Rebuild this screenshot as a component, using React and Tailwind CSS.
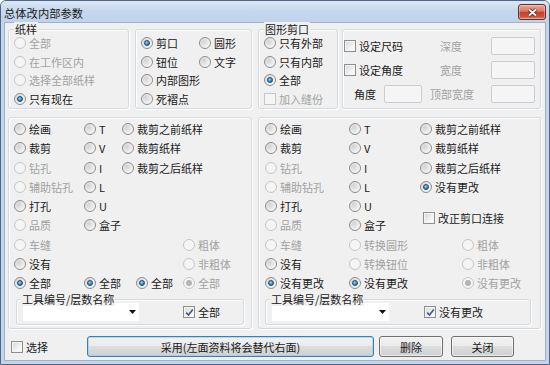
import React from "react";

function Radio({ checked, disabled, label }) {
  return (
    <div className="flex h-full items-center gap-[3px] whitespace-nowrap">
      <span
        className={`flex h-[12px] w-[12px] shrink-0 items-center justify-center rounded-full border ${
          disabled
            ? "border-[#c6c6c6] bg-[#f5f5f5]"
            : "border-[#8c8c8c] bg-[radial-gradient(circle_at_35%_35%,#d2d2d2,#f6f6f6_75%)]"
        }`}
      >
        {checked && (
          <span
            className={`h-[6px] w-[6px] rounded-full ${
              disabled
                ? "bg-[#b4b4b4]"
                : "border border-[#1d4f7a] bg-[radial-gradient(circle_at_40%_35%,#9ad8f8,#2a7fbd_65%,#114d82)]"
            }`}
          />
        )}
      </span>
      <span className={disabled ? "text-[#a2a2a2]" : "text-[#1a1a1a]"}>{label}</span>
    </div>
  );
}

function Check({ checked, disabled, label }) {
  return (
    <div className="flex h-full items-center gap-[3px] whitespace-nowrap">
      <span
        className={`flex h-[12px] w-[12px] shrink-0 items-center justify-center border ${
          disabled
            ? "border-[#c6c6c6] bg-[#f5f5f5]"
            : "border-[#8e8f8f] bg-[linear-gradient(135deg,#d6d6d6,#fbfbfb_80%)] shadow-[inset_0_0_0_1px_#f4f4f4]"
        }`}
      >
        {checked && (
          <svg width="9" height="9" viewBox="0 0 9 9">
            <path d="M1.2 4.6 L3.5 7 L7.8 1.5" fill="none" stroke="#3d5a9a" strokeWidth="1.7" />
          </svg>
        )}
      </span>
      <span className={disabled ? "text-[#a2a2a2]" : "text-[#1a1a1a]"}>{label}</span>
    </div>
  );
}

function Group({ title, className, titleLeft, children }) {
  return (
    <div
      className={`relative rounded-[3px] border border-[#d3dbe1] shadow-[inset_1px_1px_0_#fff,1px_1px_0_#fff] ${className}`}
    >
      {title && (
        <span
          className={`absolute top-[-8px] bg-[#f0f0f0] px-[1px] leading-[14px] text-[#1a1a1a] whitespace-nowrap ${
            titleLeft || "left-[5px]"
          }`}
        >
          {title}
        </span>
      )}
      {children}
    </div>
  );
}

function Input({ w }) {
  return <div className={`h-[18px] ${w} rounded-[2px] border border-[#c9cdd1] bg-[#f5f5f5]`} />;
}

function Dropdown({ w }) {
  return (
    <div className={`flex h-[18px] ${w} items-center justify-end bg-white pr-[3px]`}>
      <svg width="7" height="4" viewBox="0 0 7 4">
        <path d="M0 0 H7 L3.5 4 Z" fill="#111" />
      </svg>
    </div>
  );
}

function Button({ w, children, primary }) {
  return (
    <div
      className={`flex h-[21px] ${w} items-center justify-center rounded-[3px] border text-[#1a1a1a] bg-[linear-gradient(#f2f2f2,#ebebeb_50%,#dddddd_50%,#cfcfcf)] ${
        primary
          ? "border-[#3c7fb1] shadow-[inset_0_0_0_1px_rgba(150,210,245,0.7)]"
          : "border-[#707070] shadow-[inset_0_0_0_1px_rgba(255,255,255,0.6)]"
      }`}
    >
      {children}
    </div>
  );
}

export default function App() {
  return (
    <div className="h-[365px] w-[550px] select-none font-['Noto_Sans_CJK_SC','Noto_Sans',sans-serif] text-[11px] leading-[14px]">
      <div className="flex h-full w-full flex-col rounded-t-[6px] border border-[#4f6787] bg-[#c3d5eb]">
        {/* title bar */}
        <div className="flex h-[21px] shrink-0 items-start justify-between rounded-t-[5px] bg-[linear-gradient(#dbe7f5,#c7d8ed_45%,#c0d3ea)] pl-[3px] pr-[3px] pt-[3px]">
          <span className="mt-[2px] text-[11.3px] leading-[14px] text-[#1a1a1a]">总体改内部参数</span>
          <div className="flex h-[16px] w-[28px] items-center justify-center rounded-[3px] border border-[#6b2a20] bg-[linear-gradient(#eaa99a,#d8765f_45%,#c44328_52%,#c84f38_80%,#d9846e)] shadow-[inset_0_0_0_1px_rgba(255,255,255,0.35)]">
            <svg width="11" height="9" viewBox="0 0 11 9">
              <path d="M2 1.5 L9 7.5 M9 1.5 L2 7.5" stroke="#5a1f16" strokeWidth="3.4" />
              <path d="M2 1.5 L9 7.5 M9 1.5 L2 7.5" stroke="#fff" strokeWidth="1.8" />
            </svg>
          </div>
        </div>

        {/* body */}
        <div className="mx-[3px] flex h-[339px] flex-col border border-[#9fb2c8] bg-[#f0f0f0]">
          {/* top row */}
          <div className="ml-[3px] mt-[6px] flex h-[80px]">
            <Group title="纸样" className="h-[80px] w-[121px]">
              <div className="flex flex-col pl-[5px] pt-[3.65px]">
                <div className="h-[18.7px]"><Radio disabled label="全部" /></div>
                <div className="h-[18.7px]"><Radio disabled label="在工作区内" /></div>
                <div className="h-[18.7px]"><Radio disabled label="选择全部纸样" /></div>
                <div className="h-[18.7px]"><Radio checked label="只有现在" /></div>
              </div>
            </Group>

            <Group className="ml-[6px] h-[80px] w-[117px]">
              <div className="grid grid-cols-[58px_1fr] grid-rows-[repeat(4,18.7px)] pl-[5px] pt-[3.65px]">
                <Radio checked label="剪口" />
                <Radio label="圆形" />
                <Radio label="钮位" />
                <Radio label="文字" />
                <div className="col-span-2"><Radio label="内部图形" /></div>
                <div className="col-span-2"><Radio label="死褶点" /></div>
              </div>
            </Group>

            <Group title="图形剪口" className="ml-[6px] h-[80px] w-[80px]">
              <div className="flex flex-col pl-[5px] pt-[3.65px]">
                <div className="h-[18.7px]"><Radio label="只有外部" /></div>
                <div className="h-[18.7px]"><Radio label="只有内部" /></div>
                <div className="h-[18.7px]"><Radio checked label="全部" /></div>
                <div className="h-[18.7px]"><Check disabled label="加入缝份" /></div>
              </div>
            </Group>

            <Group className="ml-[4px] h-[80px] w-[199px]">
              <div className="flex flex-col pt-[4px]">
                <div className="flex h-[24px] items-center">
                  <div className="h-full w-[97px] pl-[1px]"><Check label="设定尺码" /></div>
                  <div className="w-[51px] text-[#a2a2a2]">深度</div>
                  <Input w="w-[44px]" />
                </div>
                <div className="flex h-[24px] items-center">
                  <div className="h-full w-[97px] pl-[1px]"><Check label="设定角度" /></div>
                  <div className="w-[51px] text-[#a2a2a2]">宽度</div>
                  <Input w="w-[44px]" />
                </div>
                <div className="flex h-[24px] items-center pl-[11px]">
                  <div className="w-[30px] text-[#1a1a1a]">角度</div>
                  <Input w="w-[38px]" />
                  <div className="ml-[8px] w-[61px] text-[#a2a2a2]">顶部宽度</div>
                  <Input w="w-[44px]" />
                </div>
              </div>
            </Group>
          </div>

          {/* big row */}
          <div className="ml-[3px] mt-[8px] flex h-[212px]">
            <Group className="h-[212px] w-[244px]">
              <div className="grid grid-cols-[70px_38px_14px_47px_1fr] grid-rows-[repeat(9,19.25px)] pl-[5px] pt-[1.375px]">
                <div className="col-start-1 row-start-1"><Radio label="绘画" /></div>
                <div className="col-start-2 row-start-1"><Radio label="T" /></div>
                <div className="col-span-3 col-start-3 row-start-1"><Radio label="裁剪之前纸样" /></div>
                <div className="col-start-1 row-start-2"><Radio label="裁剪" /></div>
                <div className="col-start-2 row-start-2"><Radio label="V" /></div>
                <div className="col-span-3 col-start-3 row-start-2"><Radio label="裁剪纸样" /></div>
                <div className="col-start-1 row-start-3"><Radio disabled label="钻孔" /></div>
                <div className="col-start-2 row-start-3"><Radio label="I" /></div>
                <div className="col-span-3 col-start-3 row-start-3"><Radio label="裁剪之后纸样" /></div>
                <div className="col-start-1 row-start-4"><Radio disabled label="辅助钻孔" /></div>
                <div className="col-start-2 row-start-4"><Radio label="L" /></div>
                <div className="col-start-1 row-start-5"><Radio label="打孔" /></div>
                <div className="col-start-2 row-start-5"><Radio label="U" /></div>
                <div className="col-start-1 row-start-6"><Radio disabled label="品质" /></div>
                <div className="col-span-2 col-start-2 row-start-6"><Radio label="盒子" /></div>
                <div className="col-start-1 row-start-7"><Radio disabled label="车缝" /></div>
                <div className="col-start-5 row-start-7"><Radio disabled label="粗体" /></div>
                <div className="col-start-1 row-start-8"><Radio label="没有" /></div>
                <div className="col-start-5 row-start-8"><Radio disabled label="非粗体" /></div>
                <div className="col-start-1 row-start-9"><Radio checked label="全部" /></div>
                <div className="col-span-2 col-start-2 row-start-9"><Radio checked label="全部" /></div>
                <div className="col-start-4 row-start-9"><Radio checked label="全部" /></div>
                <div className="col-start-5 row-start-9"><Radio checked disabled label="全部" /></div>
              </div>
              <Group title="工具编号/层数名称" titleLeft="left-[4px]" className="ml-[7px] mt-[6.375px] h-[26px] w-[228px]">
                <div className="flex h-full items-center pl-[6px]">
                  <Dropdown w="w-[116px]" />
                  <div className="ml-[44px] h-full"><Check checked label="全部" /></div>
                </div>
              </Group>
            </Group>

            <Group className="ml-[6px] h-[212px] w-[283px]">
              <div className="grid grid-cols-[84px_71px_42px_1fr] grid-rows-[repeat(9,19.25px)] pl-[6px] pt-[1.375px]">
                <div className="col-start-1 row-start-1"><Radio label="绘画" /></div>
                <div className="col-start-2 row-start-1"><Radio label="T" /></div>
                <div className="col-span-2 col-start-3 row-start-1"><Radio label="裁剪之前纸样" /></div>
                <div className="col-start-1 row-start-2"><Radio label="裁剪" /></div>
                <div className="col-start-2 row-start-2"><Radio label="V" /></div>
                <div className="col-span-2 col-start-3 row-start-2"><Radio label="裁剪纸样" /></div>
                <div className="col-start-1 row-start-3"><Radio disabled label="钻孔" /></div>
                <div className="col-start-2 row-start-3"><Radio label="I" /></div>
                <div className="col-span-2 col-start-3 row-start-3"><Radio label="裁剪之后纸样" /></div>
                <div className="col-start-1 row-start-4"><Radio disabled label="辅助钻孔" /></div>
                <div className="col-start-2 row-start-4"><Radio label="L" /></div>
                <div className="col-span-2 col-start-3 row-start-4"><Radio checked label="没有更改" /></div>
                <div className="col-start-1 row-start-5"><Radio label="打孔" /></div>
                <div className="col-start-2 row-start-5"><Radio label="U" /></div>
                <div className="col-span-2 col-start-3 row-span-2 row-start-5 pl-[3px] pt-[4px]"><Check label="改正剪口连接" /></div>
                <div className="col-start-1 row-start-6"><Radio disabled label="品质" /></div>
                <div className="col-start-2 row-start-6"><Radio label="盒子" /></div>
                <div className="col-start-1 row-start-7"><Radio disabled label="车缝" /></div>
                <div className="col-start-2 row-start-7"><Radio disabled label="转换圆形" /></div>
                <div className="col-start-4 row-start-7"><Radio disabled label="粗体" /></div>
                <div className="col-start-1 row-start-8"><Radio label="没有" /></div>
                <div className="col-start-2 row-start-8"><Radio disabled label="转换钮位" /></div>
                <div className="col-start-4 row-start-8"><Radio disabled label="非粗体" /></div>
                <div className="col-start-1 row-start-9"><Radio checked label="没有更改" /></div>
                <div className="col-start-2 row-start-9"><Radio checked label="没有更改" /></div>
                <div className="col-start-4 row-start-9"><Radio checked disabled label="没有更改" /></div>
              </div>
              <Group title="工具编号/层数名称" titleLeft="left-[4px]" className="ml-[6px] mt-[6.375px] h-[26px] w-[266px]">
                <div className="flex h-full items-center pl-[6px]">
                  <Dropdown w="w-[117px]" />
                  <div className="ml-[35px] h-full"><Check checked label="没有更改" /></div>
                </div>
              </Group>
            </Group>
          </div>

          {/* bottom row */}
          <div className="mt-[7px] flex h-[21px] items-center">
            <div className="h-full w-[82px] pl-[6px]"><Check label="选择" /></div>
            <Button w="w-[287px]" primary>采用(左面资料将会替代右面)</Button>
            <div className="ml-[5px]"><Button w="w-[64px]">删除</Button></div>
            <div className="ml-[8px]"><Button w="w-[63px]">关闭</Button></div>
          </div>
        </div>
      </div>
    </div>
  );
}
